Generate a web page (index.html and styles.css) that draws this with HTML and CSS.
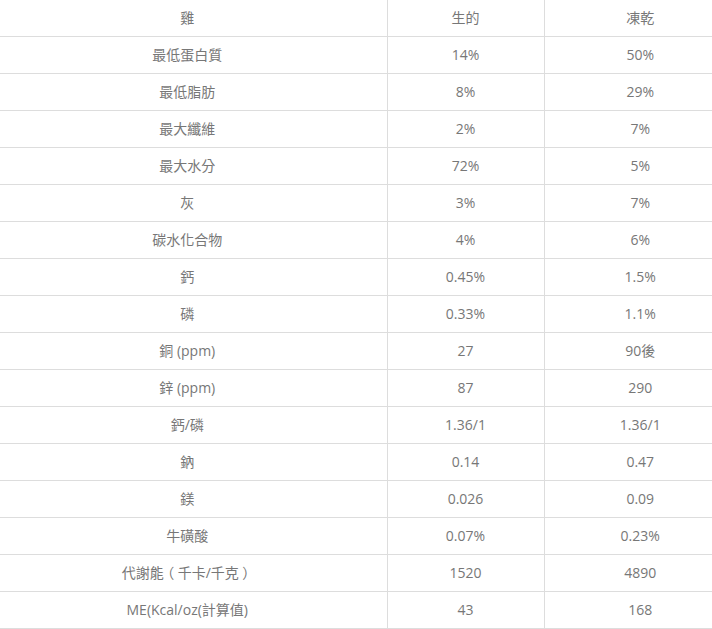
FILE: index.html
```html
<!DOCTYPE html>
<html lang="zh-Hant">
<head>
<meta charset="utf-8">
<link rel="stylesheet" href="styles.css">
</head>
<body>
<div class="wrap">
<table class="nutri">
<colgroup><col class="c1"><col class="c2"><col class="c3"></colgroup>
<thead>
<tr><th>雞</th><th>生的</th><th>凍乾</th></tr>
</thead>
<tbody>
<tr><td>最低蛋白質</td><td>14%</td><td>50%</td></tr>
<tr><td>最低脂肪</td><td>8%</td><td>29%</td></tr>
<tr><td>最大纖維</td><td>2%</td><td>7%</td></tr>
<tr><td>最大水分</td><td>72%</td><td>5%</td></tr>
<tr><td>灰</td><td>3%</td><td>7%</td></tr>
<tr><td>碳水化合物</td><td>4%</td><td>6%</td></tr>
<tr><td>鈣</td><td>0.45%</td><td>1.5%</td></tr>
<tr><td>磷</td><td>0.33%</td><td>1.1%</td></tr>
<tr><td>銅 (ppm)</td><td>27</td><td>90後</td></tr>
<tr><td>鋅 (ppm)</td><td>87</td><td>290</td></tr>
<tr><td>鈣/磷</td><td>1.36/1</td><td>1.36/1</td></tr>
<tr><td>鈉</td><td>0.14</td><td>0.47</td></tr>
<tr><td>鎂</td><td>0.026</td><td>0.09</td></tr>
<tr><td>牛磺酸</td><td>0.07%</td><td>0.23%</td></tr>
<tr><td>代謝能<span class="fw">（</span>千卡/千克<span class="fw">）</span></td><td>1520</td><td>4890</td></tr>
<tr><td>ME(Kcal/oz(計算值)</td><td>43</td><td>168</td></tr>
</tbody>
</table>
</div>
</body>
</html>
```
FILE: styles.css
```css
html, body {
  margin: 0;
  padding: 0;
  background: #fff;
}
.wrap {
  width: 712px;
  overflow: hidden;
}
.nutri {
  border-collapse: collapse;
  table-layout: fixed;
  width: 748px;
  margin-left: -12px;
  font-family: "Open Sans", "Noto Sans CJK TC", sans-serif;
  font-size: 14px;
  color: #777;
}
.c1 { width: 399px; }
.c2 { width: 157px; }
.c3 { width: 192px; }
.nutri th,
.nutri td {
  height: 37px;
  padding: 0 0 1px;
  text-align: center;
  vertical-align: middle;
  font-weight: normal;
  border-bottom: 1px solid #ddd;
  border-left: 1px solid #ddd;
  box-sizing: border-box;
}
.nutri th {
  height: 36px;
}
.nutri th:first-child,
.nutri td:first-child {
  border-left: none;
}
.fw {
  display: inline-block;
  width: 1em;
  text-align: center;
  font-feature-settings: "halt";
}
```
